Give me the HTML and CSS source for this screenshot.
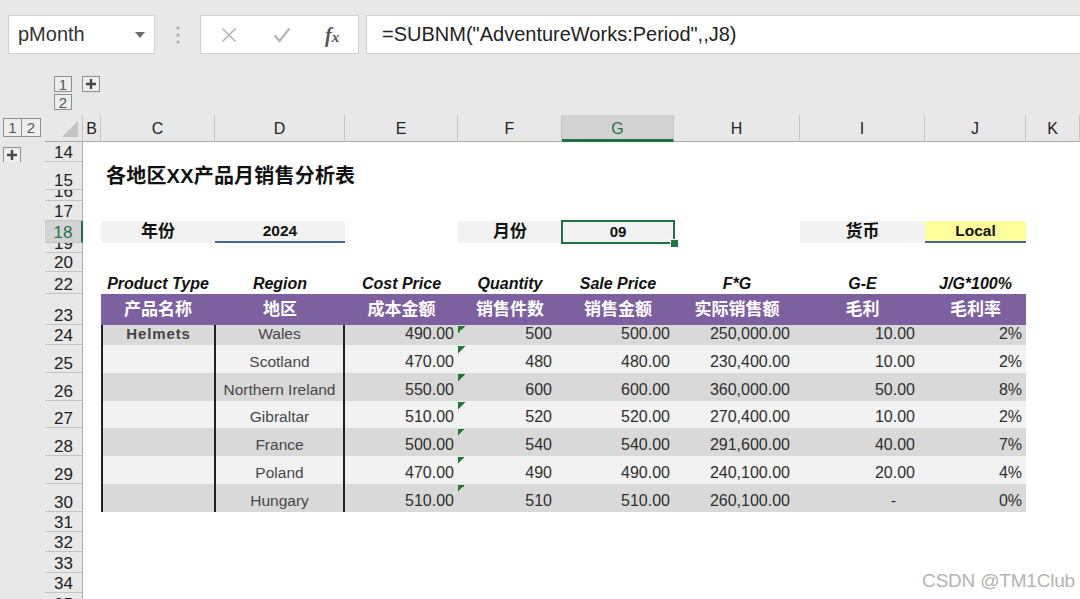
FILE: index.html
```html
<!DOCTYPE html>
<html lang="zh">
<head>
<meta charset="utf-8">
<title>各地区XX产品月销售分析表</title>
<link rel="stylesheet" href="styles.css">
</head>
<body>
<div class="app">
  <div class="fbar">
    <div class="namebox"><span class="nb-text">pMonth</span><svg class="nb-arrow" width="10" height="6" viewBox="0 0 10 6"><path d="M0 0H10L5 6Z" fill="#6b6b6b"/></svg></div>
    <svg class="vdots" width="4" height="18" viewBox="0 0 4 18"><circle cx="2" cy="2" r="1.5" fill="#a8a8a8"/><circle cx="2" cy="9" r="1.5" fill="#a8a8a8"/><circle cx="2" cy="16" r="1.5" fill="#a8a8a8"/></svg>
    <div class="fbtns">
      <svg class="ic-x" width="16" height="16" viewBox="0 0 16 16"><path d="M1.5 1.5L14.5 14.5M14.5 1.5L1.5 14.5" stroke="#b4b4b4" stroke-width="1.6" fill="none"/></svg>
      <svg class="ic-ok" width="18" height="16" viewBox="0 0 18 16"><path d="M1.5 8.5L6.5 14L16.5 1.5" stroke="#b4b4b4" stroke-width="2.2" fill="none"/></svg>
      <span class="ic-fx"><i>f</i><i class="fx-x">x</i></span>
    </div>
    <div class="formula">=SUBNM("AdventureWorks:Period",,J8)</div>
  </div>

  <div class="oltop">
    <div class="olstack"><span class="olb">1</span><span class="olb">2</span></div>
    <span class="olb"><svg width="12" height="12" viewBox="0 0 12 12"><path d="M6 1V11M1 6H11" stroke="#444" stroke-width="2.4"/></svg></span>
  </div>

  <div class="sheet">
    <div class="row colhdr">
      <div class="ol"><div class="olpair"><span class="olb sq">1</span><span class="olb sq">2</span></div></div>
      <div class="corner"><svg width="16" height="16" viewBox="0 0 16 16"><path d="M16 0V16H0Z" fill="#c4c4c4"/></svg></div>
      <div class="ch">B</div><div class="ch">C</div><div class="ch">D</div><div class="ch">E</div><div class="ch">F</div><div class="ch chsel">G</div><div class="ch">H</div><div class="ch">I</div><div class="ch">J</div><div class="ch">K</div>
    </div>

    <div class="row h20"><div class="ol"><span class="olb plusb"><svg width="12" height="12" viewBox="0 0 12 12"><path d="M6 1V11M1 6H11" stroke="#444" stroke-width="2.4"/></svg></span></div><div class="rh">14</div><div class="fill"></div></div>
    <div class="row h28"><div class="ol"></div><div class="rh">15</div><div class="c"></div><div class="c title">各地区XX产品月销售分析表</div></div>
    <div class="row h11"><div class="ol"></div><div class="rh">16</div><div class="fill"></div></div>
    <div class="row h20"><div class="ol"></div><div class="rh">17</div><div class="fill"></div></div>
    <div class="row h22">
      <div class="ol"></div><div class="rh rhsel">18</div>
      <div class="c"></div>
      <div class="c lbl">年份</div>
      <div class="c val">2024</div>
      <div class="c"></div>
      <div class="c lbl">月份</div>
      <div class="c lbl sel">09</div>
      <div class="c"></div>
      <div class="c lbl">货币</div>
      <div class="c val yel">Local</div>
      <div class="c"></div>
    </div>
    <div class="row h10"><div class="ol"></div><div class="rh">19</div><div class="fill"></div></div>
    <div class="row h19"><div class="ol"></div><div class="rh">20</div><div class="fill"></div></div>
    <div class="row h22">
      <div class="ol"></div><div class="rh">22</div>
      <div class="c"></div>
      <div class="c eh">Product Type</div>
      <div class="c eh">Region</div>
      <div class="c eh">Cost Price</div>
      <div class="c eh">Quantity</div>
      <div class="c eh">Sale Price</div>
      <div class="c eh">F*G</div>
      <div class="c eh">G-E</div>
      <div class="c eh">J/G*100%</div>
      <div class="c"></div>
    </div>
    <div class="row h31">
      <div class="ol"></div><div class="rh">23</div>
      <div class="c"></div>
      <div class="c ph">产品名称</div>
      <div class="c ph">地区</div>
      <div class="c ph">成本金额</div>
      <div class="c ph">销售件数</div>
      <div class="c ph">销售金额</div>
      <div class="c ph">实际销售额</div>
      <div class="c ph">毛利</div>
      <div class="c ph">毛利率</div>
      <div class="c"></div>
    </div>

    <div class="row h20 dk">
      <div class="ol"></div><div class="rh">24</div><div class="c"></div>
      <div class="c d cc prod">Helmets</div><div class="c d dc reg">Wales</div>
      <div class="c d n p5">490.00</div><div class="c d n p10 tri">500</div><div class="c d n p4">500.00</div><div class="c d n p10">250,000.00</div><div class="c d n p10">10.00</div><div class="c d n p4">2%</div><div class="c"></div>
    </div>
    <div class="row h28 lt">
      <div class="ol"></div><div class="rh">25</div><div class="c"></div>
      <div class="c d cc"></div><div class="c d dc reg">Scotland</div>
      <div class="c d n p5">470.00</div><div class="c d n p10 tri">480</div><div class="c d n p4">480.00</div><div class="c d n p10">230,400.00</div><div class="c d n p10">10.00</div><div class="c d n p4">2%</div><div class="c"></div>
    </div>
    <div class="row h28 dk">
      <div class="ol"></div><div class="rh">26</div><div class="c"></div>
      <div class="c d cc"></div><div class="c d dc reg">Northern Ireland</div>
      <div class="c d n p5">550.00</div><div class="c d n p10 tri">600</div><div class="c d n p4">600.00</div><div class="c d n p10">360,000.00</div><div class="c d n p10">50.00</div><div class="c d n p4">8%</div><div class="c"></div>
    </div>
    <div class="row h27 lt">
      <div class="ol"></div><div class="rh">27</div><div class="c"></div>
      <div class="c d cc"></div><div class="c d dc reg">Gibraltar</div>
      <div class="c d n p5">510.00</div><div class="c d n p10 tri">520</div><div class="c d n p4">520.00</div><div class="c d n p10">270,400.00</div><div class="c d n p10">10.00</div><div class="c d n p4">2%</div><div class="c"></div>
    </div>
    <div class="row h28 dk">
      <div class="ol"></div><div class="rh">28</div><div class="c"></div>
      <div class="c d cc"></div><div class="c d dc reg">France</div>
      <div class="c d n p5">500.00</div><div class="c d n p10 tri">540</div><div class="c d n p4">540.00</div><div class="c d n p10">291,600.00</div><div class="c d n p10">40.00</div><div class="c d n p4">7%</div><div class="c"></div>
    </div>
    <div class="row h28 lt">
      <div class="ol"></div><div class="rh">29</div><div class="c"></div>
      <div class="c d cc"></div><div class="c d dc reg">Poland</div>
      <div class="c d n p5">470.00</div><div class="c d n p10 tri">490</div><div class="c d n p4">490.00</div><div class="c d n p10">240,100.00</div><div class="c d n p10">20.00</div><div class="c d n p4">4%</div><div class="c"></div>
    </div>
    <div class="row h28 dk">
      <div class="ol"></div><div class="rh">30</div><div class="c"></div>
      <div class="c d cc"></div><div class="c d dc reg">Hungary</div>
      <div class="c d n p5">510.00</div><div class="c d n p10 tri">510</div><div class="c d n p4">510.00</div><div class="c d n p10">260,100.00</div><div class="c d n pdash">-</div><div class="c d n p4">0%</div><div class="c"></div>
    </div>

    <div class="row h20"><div class="ol"></div><div class="rh">31</div><div class="fill"></div></div>
    <div class="row h20"><div class="ol"></div><div class="rh">32</div><div class="fill"></div></div>
    <div class="row h21"><div class="ol"></div><div class="rh">33</div><div class="fill"></div></div>
    <div class="row h20"><div class="ol"></div><div class="rh">34</div><div class="fill"></div></div>
    <div class="row h21"><div class="ol"></div><div class="rh">35</div><div class="fill"></div></div>
  </div>

  <div class="wm">CSDN @TM1Club</div>
</div>
</body>
</html>
```

FILE: styles.css
```css
* { box-sizing: border-box; }

body {
  margin: 0;
  width: 1080px;
  height: 599px;
  overflow: hidden;
  background: #e8e8e8;
  font-family: "Liberation Sans", "Noto Sans CJK SC", sans-serif;
  color: #222;
}

.app {
  position: relative;
  width: 1080px;
  height: 599px;
  overflow: hidden;
}

/* ---------- formula bar ---------- */
.fbar {
  height: 68px;
  padding: 15px 0 0 8px;
  display: flex;
  align-items: flex-start;
}

.namebox {
  width: 147px;
  height: 39px;
  background: #fff;
  border: 1px solid #d2d2d2;
  display: flex;
  align-items: center;
  justify-content: space-between;
  padding: 0 9px 0 9px;
  font-size: 20px;
  color: #333;
}

.vdots {
  margin: 11px 0 0 21px;
}

.fbtns {
  margin-left: 20px;
  width: 159px;
  height: 39px;
  background: #fff;
  border: 1px solid #d2d2d2;
  display: flex;
  align-items: center;
  padding-left: 20px;
}

.ic-ok { margin-left: 36px; }

.ic-fx {
  margin-left: 34px;
  font-family: "Liberation Serif", serif;
  font-size: 20px;
  font-weight: bold;
  color: #555;
  line-height: 1;
}
.ic-fx .fx-x { font-size: 15px; }

.formula {
  flex: 1;
  margin-left: 7px;
  margin-right: -3px;
  height: 39px;
  background: #fff;
  border: 1px solid #d2d2d2;
  padding-left: 15px;
  display: flex;
  align-items: center;
  font-size: 20px;
  color: #222;
  white-space: nowrap;
}

/* ---------- outline buttons ---------- */
.oltop {
  height: 47px;
  padding: 8px 0 0 54px;
  display: flex;
  align-items: flex-start;
  gap: 10px;
}

.olstack {
  display: flex;
  flex-direction: column;
  gap: 2px;
}

.olb {
  width: 18px;
  height: 16px;
  border: 1px solid #8e8e8e;
  display: flex;
  align-items: center;
  justify-content: center;
  font-size: 15px;
  line-height: 1;
  color: #555;
  background: #eeeeee;
}

/* ---------- sheet grid ---------- */
.row {
  display: grid;
  grid-template-columns: 45px 38px 18px 114px 130px 113px 104px 112px 126px 125px 101px 1fr;
  grid-template-rows: minmax(0, 1fr);
}

.h10 { height: 10px; }
.h11 { height: 11px; }
.h19 { height: 19px; }
.h20 { height: 20px; }
.h21 { height: 21px; }
.h22 { height: 22px; }
.h27 { height: 27px; }
.h28 { height: 28px; }
.h31 { height: 31px; }

.ol { background: #e8e8e8; }

.rh {
  background: #e8e8e8;
  border-bottom: 1px solid #c3c3c3;
  border-right: 1px solid #a9a9a9;
  display: flex;
  align-items: flex-end;
  justify-content: center;
  font-size: 17px;
  line-height: 17px;
  color: #222;
  overflow: hidden;
}

.rhsel {
  background: #d3d3d3;
  color: #217346;
  border-right: 2px solid #217346;
  padding-bottom: 1px;
}

.fill {
  grid-column: 3 / -1;
  background: #fff;
}

/* column header */
.colhdr { height: 27px; }

.colhdr .ol { padding: 3px 0 0 3px; }

.olpair { display: flex; }
.olb.sq { width: 19px; height: 19px; }
.olb.sq + .olb.sq { border-left: none; }

.plusb { margin: 5px 0 0 3px; }

.corner {
  background: #e8e8e8;
  border-bottom: 1px solid #a9a9a9;
  border-right: 1px solid #c3c3c3;
  padding: 6px 0 0 17px;
}

.ch {
  background: #e8e8e8;
  border-bottom: 1px solid #a9a9a9;
  border-right: 1px solid #c6c6c6;
  display: flex;
  align-items: center;
  justify-content: center;
  padding-top: 2px;
  font-size: 16px;
  color: #222;
}

.chsel {
  background: #d2d2d2;
  color: #217346;
  border-bottom: 3px solid #217346;
  padding-top: 4px;
}

/* cells */
.c {
  background: #fff;
  display: flex;
  align-items: center;
  white-space: nowrap;
  min-width: 0;
  min-height: 0;
  line-height: 18px;
}

.title {
  grid-column: 4 / -1;
  padding-left: 5px;
  padding-bottom: 1px;
  font-size: 20px;
  line-height: 24px;
  font-weight: bold;
  letter-spacing: 0.2px;
  color: #111;
}

.lbl {
  background: #f2f2f2;
  justify-content: center;
  font-size: 17px;
  line-height: 20px;
  font-weight: bold;
  color: #111;
  padding-bottom: 1px;
}

.val {
  background: #f2f2f2;
  justify-content: center;
  font-size: 15.5px;
  font-weight: bold;
  color: #111;
  border-bottom: 2px solid #4a6790;
}

.yel { background: #ffff9c; }

.sel {
  position: relative;
  z-index: 1;
  font-size: 15px;
  padding-bottom: 0;
  outline: 2px solid #217346;
  outline-offset: -1px;
}

.sel::after {
  content: "";
  position: absolute;
  right: -5px;
  bottom: -5px;
  width: 7px;
  height: 7px;
  background: #217346;
  border: 1px solid #fff;
}

.eh {
  justify-content: center;
  align-items: flex-end;
  font-size: 16px;
  line-height: 18px;
  padding-bottom: 1px;
  font-weight: bold;
  font-style: italic;
  color: #111;
}

.ph {
  background: #7d60a0;
  justify-content: center;
  font-size: 17px;
  line-height: 22px;
  font-weight: bold;
  color: #fff;
}

/* data rows */
.dk .d { background-color: #d9d9d9; }
.lt .d { background-color: #f2f2f2; }

.d {
  align-items: flex-end;
  padding-bottom: 2px;
  font-size: 16px;
  line-height: 18px;
  color: #2e2e2e;
}

.cc {
  border-left: 2px solid #222;
  border-right: 1px solid #222;
  justify-content: center;
}

.dc {
  border-left: 1px solid #222;
  border-right: 2px solid #222;
  justify-content: center;
}

.prod {
  font-size: 15px;
  font-weight: bold;
  letter-spacing: 0.9px;
  color: #444;
}

.reg {
  font-size: 15.5px;
  color: #474747;
}

.n { justify-content: flex-end; }
.p4 { padding-right: 4px; }
.p5 { padding-right: 4px; }
.p10 { padding-right: 10px; }
.pdash { padding-right: 29px; }

.tri {
  background-image: linear-gradient(to bottom right, #1f7a2f 50%, transparent 50%);
  background-size: 7px 7px;
  background-repeat: no-repeat;
  background-position: 0 1px;
}

/* watermark */
.wm {
  position: absolute;
  right: 5px;
  bottom: 7px;
  font-size: 19px;
  color: #b3b3b3;
  letter-spacing: -0.2px;
}
```
